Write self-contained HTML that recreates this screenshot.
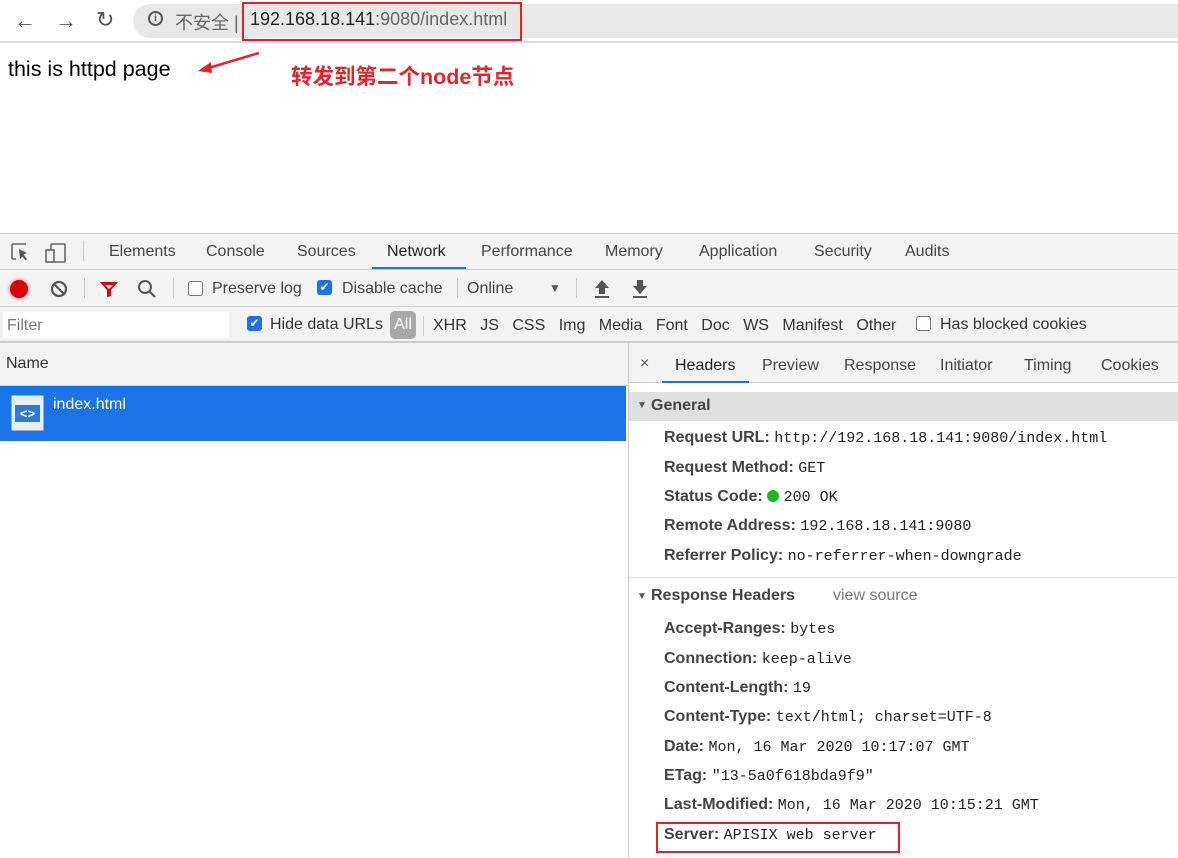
<!DOCTYPE html>
<html><head><meta charset="utf-8"><style>
*{margin:0;padding:0;box-sizing:border-box}
body{width:1178px;height:858px;position:relative;overflow:hidden;background:#fff;font-family:"Liberation Sans","Noto Sans CJK SC",sans-serif;color:#333}
.a{position:absolute;white-space:nowrap}
.t{font-size:16px;color:#444}
.k{font-weight:bold;font-size:16px;color:#444}
.m{font-family:"Liberation Mono",monospace;font-size:15px;color:#222}
.cb{position:absolute;width:15px;height:15px;border:1px solid #777;border-radius:3px;background:#fff}
.cbc{position:absolute;width:15px;height:15px;border-radius:3px;background:#1a73e8;color:#fff;font-size:12px;line-height:15px;text-align:center}
</style></head><body>
<!-- browser bar -->
<div class="a" style="left:0;top:0;width:1178px;height:43px;background:#fff;border-bottom:2px solid #ddd"></div>
<div class="a" style="left:14px;top:8px;font-size:22px;color:#555">←</div>
<div class="a" style="left:55px;top:8px;font-size:22px;color:#555">→</div>
<div class="a" style="left:96px;top:7px;font-size:22px;color:#555">↻</div>
<div class="a" style="left:133px;top:4px;width:1100px;height:34px;border-radius:17px;background:#e8e8e8"></div>
<div class="a" style="left:148px;top:11px;width:15px;height:15px;border:2px solid #555;border-radius:50%;font-size:10px;line-height:11px;text-align:center;color:#555;font-weight:bold">i</div>
<div class="a" style="left:175px;top:9px;font-size:18px;color:#666">不安全 |</div>
<div class="a" style="left:250px;top:9px;font-size:18px;color:#222">192.168.18.141<span style="color:#666">:9080/index.html</span></div>
<div class="a" style="left:242px;top:2px;width:280px;height:39px;border:2px solid #d9262c"></div>
<!-- page -->
<div class="a" style="left:8px;top:57px;font-size:21.5px;color:#000">this is httpd page</div>
<svg class="a" style="left:195px;top:50px" width="70" height="25"><line x1="64" y1="3" x2="10" y2="19" stroke="#e0262c" stroke-width="2.5"/><polygon points="3,21 16,12 17,23" fill="#e0262c"/></svg>
<div class="a" style="left:291px;top:60px;font-size:21.5px;font-weight:bold;color:#e0262c">转发到第二个node节点</div>
<!-- devtools tabs -->
<div class="a" style="left:0;top:233px;width:1178px;height:37px;background:#f3f3f3;border-top:1px solid #ccc;border-bottom:1px solid #ccc"></div>
<svg class="a" style="left:10px;top:241px" width="60" height="22"><path d="M2 3h14M2 3v15M2 18h4" stroke="#666" stroke-width="1.6" fill="none"/><path d="M9 8l8 4-3.5 1.5L17 18l-1.5 1.5-3-4L10 18z" fill="#555"/><rect x="41" y="3" width="14" height="18" rx="1" stroke="#666" stroke-width="1.6" fill="none"/><rect x="36" y="9" width="8" height="12" stroke="#666" stroke-width="1.6" fill="#f3f3f3"/></svg>
<div class="a" style="left:83px;top:241px;width:1px;height:20px;background:#ccc"></div>
<div class="a t" style="left:109px;top:243px">Elements</div>
<div class="a t" style="left:206px;top:243px">Console</div>
<div class="a t" style="left:297px;top:243px">Sources</div>
<div class="a t" style="left:387px;top:243px;color:#222">Network</div>
<div class="a" style="left:372px;top:267px;width:94px;height:2px;background:#1a73e8"></div>
<div class="a t" style="left:481px;top:243px">Performance</div>
<div class="a t" style="left:605px;top:243px">Memory</div>
<div class="a t" style="left:699px;top:243px">Application</div>
<div class="a t" style="left:814px;top:243px">Security</div>
<div class="a t" style="left:905px;top:243px">Audits</div>
<!-- toolbar -->
<div class="a" style="left:0;top:270px;width:1178px;height:37px;background:#f3f3f3;border-bottom:1px solid #ccc"></div>
<div class="a" style="left:10px;top:280px;width:18px;height:18px;border-radius:50%;background:#d9000c;box-shadow:0 0 4px #f66"></div>
<svg class="a" style="left:50px;top:280px" width="18" height="18"><circle cx="9" cy="9" r="7" stroke="#555" stroke-width="2.2" fill="none"/><line x1="4" y1="4" x2="14" y2="14" stroke="#555" stroke-width="2.2"/></svg>
<div class="a" style="left:84px;top:278px;width:1px;height:20px;background:#ccc"></div>
<svg class="a" style="left:99px;top:280px" width="20" height="18"><path d="M1 2h18l-7 8v6l-4 1v-7z" fill="#d9000c"/><path d="M6 5h8l-4 4z" fill="#fff"/></svg>
<svg class="a" style="left:137px;top:279px" width="20" height="20"><circle cx="8" cy="8" r="6" stroke="#555" stroke-width="2" fill="none"/><line x1="12" y1="12" x2="18" y2="18" stroke="#555" stroke-width="2.2"/></svg>
<div class="a" style="left:173px;top:278px;width:1px;height:20px;background:#ccc"></div>
<div class="cb" style="left:188px;top:281px"></div>
<div class="a t" style="left:212px;top:280px">Preserve log</div>
<div class="cbc" style="left:317px;top:280px">✔</div>
<div class="a t" style="left:342px;top:280px">Disable cache</div>
<div class="a" style="left:457px;top:278px;width:1px;height:20px;background:#ccc"></div>
<div class="a t" style="left:467px;top:280px">Online</div>
<div class="a" style="left:549px;top:281px;font-size:12px;color:#555">▼</div>
<div class="a" style="left:576px;top:278px;width:1px;height:20px;background:#ccc"></div>
<svg class="a" style="left:593px;top:279px" width="18" height="20"><polygon points="9,1 2,9 6,9 6,15 12,15 12,9 16,9" fill="#555"/><rect x="2" y="17" width="14" height="2" fill="#555"/></svg>
<svg class="a" style="left:631px;top:279px" width="18" height="20"><polygon points="9,15 2,7 6,7 6,1 12,1 12,7 16,7" fill="#555"/><rect x="2" y="17" width="14" height="2" fill="#555"/></svg>
<!-- filter row -->
<div class="a" style="left:0;top:307px;width:1178px;height:36px;background:#f3f3f3;border-bottom:2px solid #ccc"></div>
<div class="a" style="left:3px;top:312px;width:226px;height:26px;background:#fff"></div>
<div class="a t" style="left:7px;top:317px;color:#777">Filter</div>
<div class="cbc" style="left:247px;top:316px">✔</div>
<div class="a t" style="left:270px;top:316px;color:#333">Hide data URLs</div>
<div class="a" style="left:390px;top:311px;width:26px;height:28px;border-radius:5px;background:#a8a8a8;color:#fff;font-size:16px;line-height:28px;text-align:center">All</div>
<div class="a" style="left:423px;top:316px;width:1px;height:20px;background:#ccc"></div>
<div class="a t" style="left:433px;top:317px;color:#333;word-spacing:9px">XHR JS CSS Img Media Font Doc WS Manifest Other</div>
<div class="cb" style="left:916px;top:316px"></div>
<div class="a t" style="left:940px;top:316px;color:#333">Has blocked cookies</div>
<!-- left pane -->
<div class="a" style="left:0;top:343px;width:628px;height:43px;background:#f3f3f3;border-bottom:1px solid #ccc"></div>
<div class="a t" style="left:6px;top:355px;color:#333">Name</div>
<div class="a" style="left:0;top:386px;width:626px;height:55px;background:#1a73e8"></div>
<div class="a" style="left:11px;top:395px;width:33px;height:36px;background:#e8eef6;border:1px solid #aab;border-radius:2px"></div>
<div class="a" style="left:15px;top:405px;width:25px;height:17px;background:#2a7ad8;color:#fff;font-size:13px;font-weight:bold;text-align:center;line-height:17px">&lt;&gt;</div>
<div class="a" style="left:53px;top:396px;font-size:16px;color:#fff">index.html</div>
<div class="a" style="left:628px;top:343px;width:1px;height:515px;background:#ccc"></div>
<!-- right pane -->
<div class="a" style="left:629px;top:343px;width:549px;height:40px;background:#f3f3f3;border-bottom:1px solid #ccc"></div>
<div class="a" style="left:640px;top:355px;font-size:16px;color:#555">×</div>
<div class="a t" style="left:675px;top:357px;color:#222">Headers</div>
<div class="a" style="left:662px;top:381px;width:87px;height:2px;background:#1a73e8"></div>
<div class="a t" style="left:762px;top:357px">Preview</div>
<div class="a t" style="left:844px;top:357px">Response</div>
<div class="a t" style="left:940px;top:357px">Initiator</div>
<div class="a t" style="left:1024px;top:357px">Timing</div>
<div class="a t" style="left:1101px;top:357px">Cookies</div>
<div class="a" style="left:629px;top:392px;width:549px;height:29px;background:#e0e0e0"></div>
<div class="a" style="left:637px;top:400px;font-size:10px;color:#555">▼</div>
<div class="a k" style="left:651px;top:397px">General</div>
<div class="a k" style="left:664px;top:429px">Request URL: <span class="m" style="font-weight:normal">http://192.168.18.141:9080/index.html</span></div>
<div class="a k" style="left:664px;top:459px">Request Method: <span class="m" style="font-weight:normal">GET</span></div>
<div class="a k" style="left:664px;top:488px">Status Code: <span style="display:inline-block;width:12px;height:12px;border-radius:50%;background:#1db922;vertical-align:-1px"></span> <span class="m" style="font-weight:normal">200 OK</span></div>
<div class="a k" style="left:664px;top:517px">Remote Address: <span class="m" style="font-weight:normal">192.168.18.141:9080</span></div>
<div class="a k" style="left:664px;top:547px">Referrer Policy: <span class="m" style="font-weight:normal">no-referrer-when-downgrade</span></div>
<div class="a" style="left:629px;top:577px;width:549px;height:1px;background:#ddd"></div>
<div class="a" style="left:637px;top:591px;font-size:10px;color:#555">▼</div>
<div class="a k" style="left:651px;top:587px">Response Headers</div>
<div class="a t" style="left:833px;top:587px;color:#777">view source</div>
<div class="a k" style="left:664px;top:620px">Accept-Ranges: <span class="m" style="font-weight:normal">bytes</span></div>
<div class="a k" style="left:664px;top:650px">Connection: <span class="m" style="font-weight:normal">keep-alive</span></div>
<div class="a k" style="left:664px;top:679px">Content-Length: <span class="m" style="font-weight:normal">19</span></div>
<div class="a k" style="left:664px;top:708px">Content-Type: <span class="m" style="font-weight:normal">text/html; charset=UTF-8</span></div>
<div class="a k" style="left:664px;top:738px">Date: <span class="m" style="font-weight:normal">Mon, 16 Mar 2020 10:17:07 GMT</span></div>
<div class="a k" style="left:664px;top:767px">ETag: <span class="m" style="font-weight:normal">"13-5a0f618bda9f9"</span></div>
<div class="a k" style="left:664px;top:796px">Last-Modified: <span class="m" style="font-weight:normal">Mon, 16 Mar 2020 10:15:21 GMT</span></div>
<div class="a k" style="left:664px;top:826px">Server: <span class="m" style="font-weight:normal">APISIX web server</span></div>
<div class="a" style="left:656px;top:822px;width:244px;height:31px;border:2px solid #d9262c"></div>
</body></html>
